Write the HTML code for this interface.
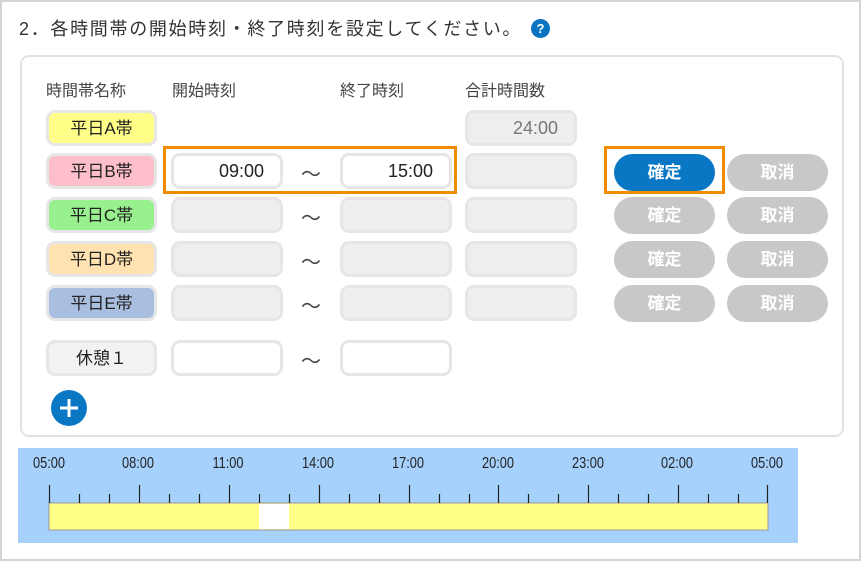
<!DOCTYPE html>
<html><head><meta charset="utf-8"><style>
*{box-sizing:border-box;margin:0;padding:0}
body{width:861px;height:561px;background:#fff;font-family:"Liberation Sans","Noto Sans CJK JP",sans-serif;position:relative;overflow:hidden;color:#333}
.frame{position:absolute;left:0;top:0;width:861px;height:561px;border:2px solid #d4d4d4}
.title{position:absolute;left:19px;top:15px;font-size:18px;letter-spacing:1.7px;color:#333}
.help{position:absolute;left:531px;top:19px;width:19px;height:19px;border-radius:50%;background:#0a73c2;color:#fff;font-size:13px;font-weight:bold;text-align:center;line-height:19px}
.card{position:absolute;left:20px;top:55px;width:824px;height:382px;border:2px solid #e2e2e2;border-radius:9px}
.h{position:absolute;top:77px;font-size:16px;color:#444}
.pill{position:absolute;left:46px;width:111px;height:36px;border:3px solid #e6e6e6;border-radius:9px;font-size:17px;text-align:center;line-height:32px;color:#222}
.in{position:absolute;width:112px;height:36px;border:3px solid #e6e6e6;border-radius:9px;background:#fff;font-size:18px;text-align:right;padding-right:16px;line-height:31px;color:#222}
.in.g{background:#eee}
.t{position:absolute;left:301px;font-size:20px;color:#444}
.btn{position:absolute;width:101px;height:37px;border-radius:19px;background:#c8c8c8;color:#fff;font-weight:bold;font-size:17px;text-align:center;line-height:37px}
.btn.b{background:#0a77c4}
.or{position:absolute;border:3px solid #f08c00}
.tl{position:absolute;left:18px;top:448px;width:780px;height:95px;background:#a6d1fd}
.lab{position:absolute;top:7px;font-size:16px;transform:scaleX(0.8);color:#222;width:50px;text-align:center}
</style></head><body>
<div class="frame"></div>
<div class="title">2．各時間帯の開始時刻・終了時刻を設定してください。</div>
<div class="help">?</div>
<div class="card"></div>
<div class="h" style="left:46px">時間帯名称</div>
<div class="h" style="left:172px">開始時刻</div>
<div class="h" style="left:340px">終了時刻</div>
<div class="h" style="left:465px">合計時間数</div>

<div class="pill" style="top:110px;background:#ffff88">平日A帯</div>
<div class="in g" style="left:465px;top:110px;color:#777">24:00</div>

<div class="pill" style="top:153px;background:#ffbfca">平日B帯</div>
<div class="in" style="left:171px;top:153px">09:00</div>
<div class="t" style="top:158px">～</div>
<div class="in" style="left:340px;top:153px">15:00</div>
<div class="in g" style="left:465px;top:153px"></div>
<div class="btn b" style="left:614px;top:154px">確定</div>
<div class="btn" style="left:727px;top:154px">取消</div>
<div class="or" style="left:163px;top:146px;width:294px;height:48px"></div>
<div class="or" style="left:604px;top:146px;width:121px;height:48px"></div>

<div class="pill" style="top:197px;background:#99f08f">平日C帯</div>
<div class="in g" style="left:171px;top:197px"></div>
<div class="t" style="top:202px">～</div>
<div class="in g" style="left:340px;top:197px"></div>
<div class="in g" style="left:465px;top:197px"></div>
<div class="btn" style="left:614px;top:197px">確定</div>
<div class="btn" style="left:727px;top:197px">取消</div>

<div class="pill" style="top:241px;background:#ffe2b0">平日D帯</div>
<div class="in g" style="left:171px;top:241px"></div>
<div class="t" style="top:246px">～</div>
<div class="in g" style="left:340px;top:241px"></div>
<div class="in g" style="left:465px;top:241px"></div>
<div class="btn" style="left:614px;top:241px">確定</div>
<div class="btn" style="left:727px;top:241px">取消</div>

<div class="pill" style="top:285px;background:#a9bfe0">平日E帯</div>
<div class="in g" style="left:171px;top:285px"></div>
<div class="t" style="top:290px">～</div>
<div class="in g" style="left:340px;top:285px"></div>
<div class="in g" style="left:465px;top:285px"></div>
<div class="btn" style="left:614px;top:285px">確定</div>
<div class="btn" style="left:727px;top:285px">取消</div>

<div class="pill" style="top:340px;background:#f2f2f2">休憩１</div>
<div class="in" style="left:171px;top:340px"></div>
<div class="t" style="top:345px">～</div>
<div class="in" style="left:340px;top:340px"></div>

<svg style="position:absolute;left:50px;top:389px" width="40" height="40"><circle cx="19" cy="19" r="18" fill="#0a77c4"/><path d="M19 10V28M10 19H28" stroke="#fff" stroke-width="3"/></svg>

<div class="tl">
<div class="lab" style="left:6px">05:00</div>
<div class="lab" style="left:95px">08:00</div>
<div class="lab" style="left:185px">11:00</div>
<div class="lab" style="left:275px">14:00</div>
<div class="lab" style="left:365px">17:00</div>
<div class="lab" style="left:455px">20:00</div>
<div class="lab" style="left:545px">23:00</div>
<div class="lab" style="left:634px">02:00</div>
<div class="lab" style="left:724px">05:00</div>
<svg style="position:absolute;left:0;top:0" width="780" height="95">
<rect x="31" y="55" width="719" height="27" fill="#ffff88" stroke="#999" stroke-width="1"/>
<rect x="241" y="56" width="30" height="25" fill="#fff"/>
<g stroke="#222" stroke-width="1.2">
<path d="M31.5 37V55M121.5 37V55M211.5 37V55M301.5 37V55M391.5 37V55M480.5 37V55M570.5 37V55M660.5 37V55M749.5 37V55"/>
<path d="M61.5 46V55M91.5 46V55M151.5 46V55M181.5 46V55M241.5 46V55M271.5 46V55M331.5 46V55M361.5 46V55M421.5 46V55M451.5 46V55M510.5 46V55M540.5 46V55M600.5 46V55M630.5 46V55M690.5 46V55M720.5 46V55"/>
</g></svg>
</div>
</body></html>
